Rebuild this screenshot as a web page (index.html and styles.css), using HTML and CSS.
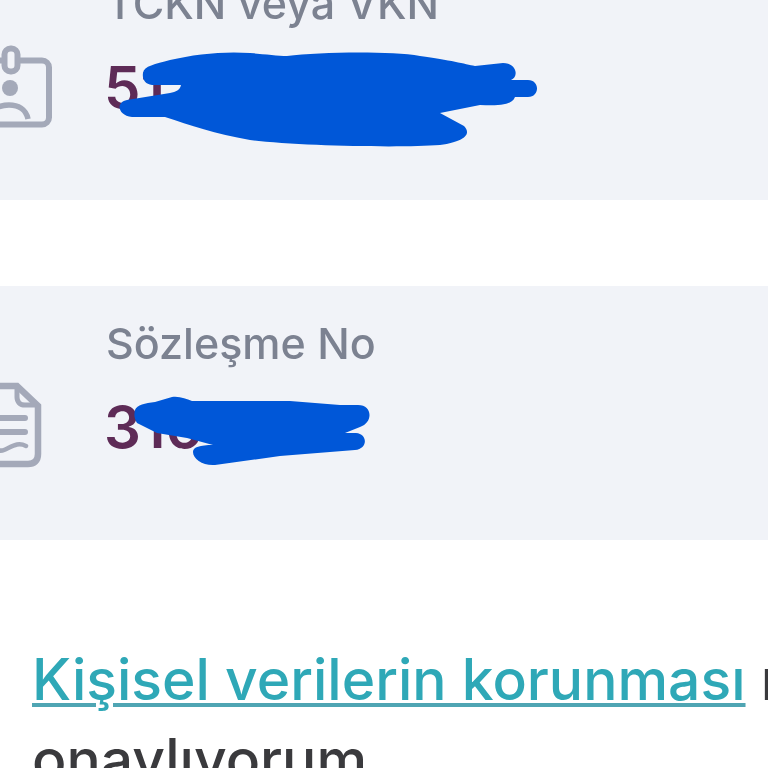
FILE: index.html
```html
<!DOCTYPE html>
<html lang="tr">
<head>
<meta charset="utf-8">
<title>Sözleşme Bilgileri</title>
<link rel="stylesheet" href="styles.css">
</head>
<body>
<main class="screen">
  <section class="card card-first">
    <svg class="icon icon-badge" viewBox="0 0 60 90" aria-hidden="true">
      <rect x="-8" y="19.5" width="59" height="64" rx="7" fill="none" stroke="#a4a9b9" stroke-width="6"/>
      <rect x="6.5" y="7.5" width="13" height="23" rx="6" fill="#f1f3f8" stroke="#a4a9b9" stroke-width="6"/>
      <circle cx="12" cy="47" r="8" fill="#a4a9b9"/>
      <path d="M-10 78C-8 68 2 64 11 64S28 68 30 78" fill="none" stroke="#a4a9b9" stroke-width="5.5"/>
    </svg>
    <div class="field">
      <div class="label">TCKN veya VKN</div>
      <div class="value">51</div>
    </div>
    <svg class="scribble" viewBox="0 0 768 200" aria-hidden="true">
      <path d="M143 73C144 66 155 64 170 60C195 54 225 51 250 53C265 54 278 56 287 56C320 52 390 51 420 56C450 60 465 64 475 66L503 63C517 63 519 77 511 80H528C540 80 540 97 528 97H515C512 105 500 106 480 105L440 113L464 126C471 133 467 141 440 145C400 148 300 146 250 140C215 134 190 125 165 117H132C117 115 116 102 127 100L170 93C176 92 180 90 181 85H152C145 84 142 79 143 73Z"/>
    </svg>
  </section>

  <section class="card card-second">
    <svg class="icon icon-doc" viewBox="0 0 60 90" aria-hidden="true">
      <path d="M-10 4H27L48 24V72C48 79 44 82 38 82H-10" fill="none" stroke="#a4a9b9" stroke-width="6.5"/>
      <path d="M27 4V15C27 20 30 23 35 23H48" fill="none" stroke="#a4a9b9" stroke-width="5"/>
      <path d="M-10 36H35M-10 50H35" fill="none" stroke="#a4a9b9" stroke-width="6" stroke-linecap="round"/>
      <path d="M-10 64C-2 58 5 72 14 68S28 60 36 64" fill="none" stroke="#a4a9b9" stroke-width="4.5" stroke-linecap="round"/>
    </svg>
    <div class="field">
      <div class="label">Sözleşme No</div>
      <div class="value">316</div>
    </div>
    <svg class="scribble" viewBox="0 0 768 254" aria-hidden="true">
      <path d="M135 124C137 119 145 117 155 116L172 111C180 110 186 113 192 115H290L340 119H358C373 119 373 137 360 141L345 147H356C368 148 368 163 355 164L280 170L215 179C203 180 193 173 193 166C193 161 200 159 213 159L187 152L157 147L137 137C134 132 134 128 135 124Z"/>
    </svg>
  </section>

  <p class="consent"><a class="consent-link" href="#">Kişisel verilerin korunması</a> metnini<br>onaylıyorum</p>
</main>
</body>
</html>
```

FILE: styles.css
```css
html, body {
  margin: 0;
  padding: 0;
  background: #fff;
}

.screen {
  width: 768px;
  height: 768px;
  overflow: hidden;
  font-family: "Inter", "Liberation Sans", sans-serif;
  filter: blur(0.5px);
}

.card {
  position: relative;
  display: flex;
  align-items: flex-start;
  gap: 48px;
  height: 254px;
  box-sizing: border-box;
  background: #f1f3f8;
}

.card-first {
  margin-top: -54px;
}

.card-second {
  margin-top: 86px;
}

.icon {
  flex: none;
  width: 60px;
  height: 90px;
  margin-left: -2px;
  overflow: visible;
}

.icon-badge {
  margin-top: 95px;
}

.icon-doc {
  margin-top: 96px;
  margin-left: -10px;
  margin-right: 8px;
}

.field {
  padding-top: 34px;
}

.label {
  font-size: 43px;
  line-height: 46px;
  font-weight: 500;
  color: #7c8291;
  white-space: nowrap;
}

.value {
  margin-top: 27px;
  margin-left: -2px;
  font-size: 58px;
  line-height: 68px;
  font-weight: 600;
  color: #5e2b57;
}

.scribble {
  position: absolute;
  left: 0;
  top: 54px;
  width: 768px;
  height: 200px;
  fill: #0057d8;
}

.card-second .scribble {
  top: 0;
  height: 254px;
}

.consent {
  margin: 100px 0 0 32px;
  font-size: 57px;
  line-height: 80px;
  font-weight: 500;
  color: #3a3a3d;
  white-space: nowrap;
}

.consent-link {
  color: #2fa8b7;
  text-decoration: underline;
  text-decoration-color: #4fa5b3;
  text-decoration-thickness: 4px;
  text-underline-offset: 3px;
}
```
